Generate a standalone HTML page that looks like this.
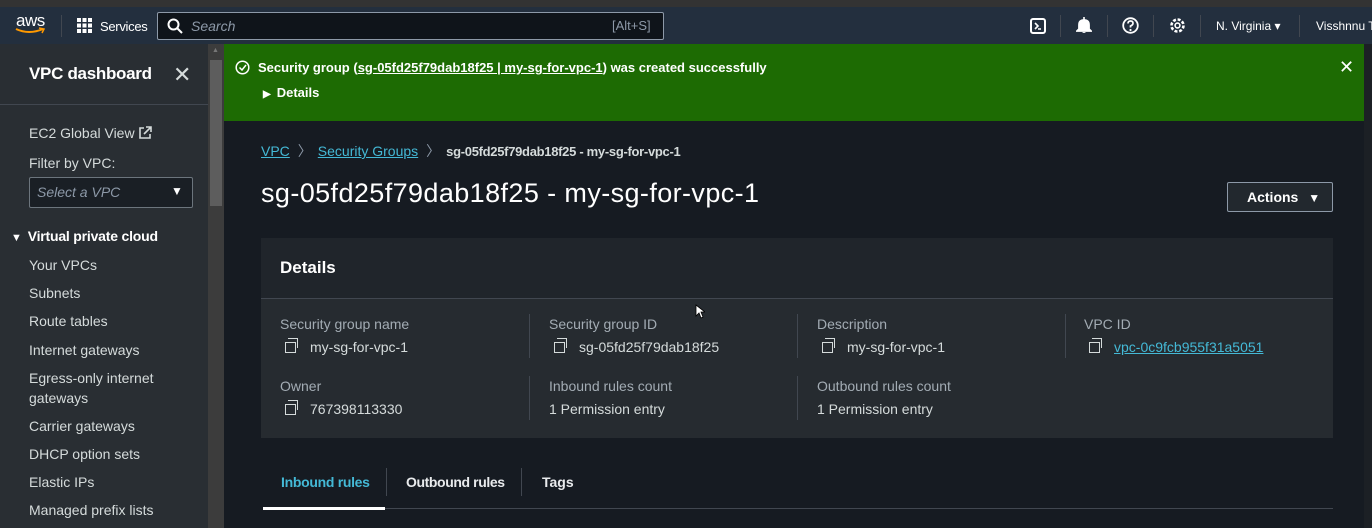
<!DOCTYPE html><html><head><meta charset="utf-8"><style>
*{box-sizing:border-box;margin:0;padding:0}
body{width:1372px;height:528px;overflow:hidden;background:#161b22;font-family:"Liberation Sans",sans-serif;color:#d5dbdb;position:relative;font-size:14px}
.a{position:absolute}
.link{color:#44b9d6;text-decoration:underline}
.lbl{color:#a3acb4;font-size:14px}
.val{color:#d5dbdb;font-size:14px}
.cp{display:inline-block;width:11px;height:11px;border:1.5px solid #d5dbdb;position:relative;margin-right:14px;vertical-align:-1px}
.cp:before{content:"";position:absolute;left:2px;top:-5px;width:9px;height:9px;border-top:1.5px solid #d5dbdb;border-right:1.5px solid #d5dbdb}
.nav{position:absolute;left:29px;font-size:14px;color:#d5dbdb}
.vs{position:absolute;width:1px;background:#414750}
</style></head><body>
<div class="a" style="left:0;top:0;width:1372px;height:7px;background:#333"></div>
<div class="a" style="left:0;top:7px;width:1372px;height:37px;background:#232f3e"></div>
<div class="a" style="left:16px;top:11px;color:#fff;font-size:17px;letter-spacing:-.5px">aws</div>
<svg class="a" style="left:15px;top:27px" width="32" height="8"><path d="M1 2 Q14 8 28 2" stroke="#f90" stroke-width="2" fill="none"/><path d="M24 1 L29 2 L27 6" stroke="#f90" stroke-width="1.5" fill="none"/></svg>
<div class="a" style="left:61px;top:15px;width:1px;height:22px;background:#414750"></div>
<svg class="a" style="left:77px;top:18px" width="15" height="15" fill="#fff"><rect x="0" y="0" width="4" height="4"/><rect x="5.5" y="0" width="4" height="4"/><rect x="11" y="0" width="4" height="4"/><rect x="0" y="5.5" width="4" height="4"/><rect x="5.5" y="5.5" width="4" height="4"/><rect x="11" y="5.5" width="4" height="4"/><rect x="0" y="11" width="4" height="4"/><rect x="5.5" y="11" width="4" height="4"/><rect x="11" y="11" width="4" height="4"/></svg>
<div class="a" style="left:100px;top:19px;color:#fff;font-size:13px;letter-spacing:-.3px">Services</div>
<div class="a" style="left:157px;top:12px;width:507px;height:28px;background:#0f141a;border:1px solid #8d99a8;border-radius:2px"></div>
<svg class="a" style="left:167px;top:18px" width="16" height="16"><circle cx="6.5" cy="6.5" r="5" stroke="#fff" stroke-width="2" fill="none"/><path d="M10 10 L15 15" stroke="#fff" stroke-width="2"/></svg>
<div class="a" style="left:191px;top:18px;color:#8d99a8;font-style:italic;font-size:14px">Search</div>
<div class="a" style="left:612px;top:18px;color:#8d99a8;font-size:13px">[Alt+S]</div>
<svg class="a" style="left:1030px;top:18px" width="16" height="16"><rect x="1" y="1" width="14" height="14" rx="2" stroke="#fff" stroke-width="2" fill="none"/><path d="M5 5 L8 8 L5 11 M8 11 H11" stroke="#fff" stroke-width="1.6" fill="none"/></svg>
<div class="a" style="left:1060px;top:15px;width:1px;height:22px;background:#414750"></div>
<svg class="a" style="left:1076px;top:17px" width="16" height="17"><path d="M3 12 L3 8 Q3 3 8 3 Q13 3 13 8 L13 12 L15 14 H1 Z" stroke="#fff" stroke-width="1.8" fill="#fff"/><path d="M6 15 Q8 17 10 15" fill="#fff"/><path d="M8 0 V3" stroke="#fff" stroke-width="1.6"/></svg>
<div class="a" style="left:1107px;top:15px;width:1px;height:22px;background:#414750"></div>
<svg class="a" style="left:1122px;top:17px" width="17" height="17"><circle cx="8.5" cy="8.5" r="7.3" stroke="#fff" stroke-width="1.8" fill="none"/><path d="M6 6.5 Q6 4 8.5 4 Q11 4 11 6.3 Q11 8 8.5 9 V10.5" stroke="#fff" stroke-width="1.7" fill="none"/><circle cx="8.5" cy="13" r="1.1" fill="#fff"/></svg>
<div class="a" style="left:1153px;top:15px;width:1px;height:22px;background:#414750"></div>
<svg class="a" style="left:1169px;top:17px" width="17" height="17"><circle cx="8.5" cy="8.5" r="6" stroke="#fff" stroke-width="2.6" stroke-dasharray="3 1.7" fill="none"/><circle cx="8.5" cy="8.5" r="2.4" stroke="#fff" stroke-width="1.6" fill="none"/></svg>
<div class="a" style="left:1200px;top:15px;width:1px;height:22px;background:#414750"></div>
<div class="a" style="left:1216px;top:19px;color:#fff;font-size:12px">N. Virginia ▾</div>
<div class="a" style="left:1299px;top:15px;width:1px;height:22px;background:#414750"></div>
<div class="a" style="left:1316px;top:19px;color:#fff;font-size:12px;white-space:nowrap">Visshnnu Te</div>

<div class="a" style="left:0;top:44px;width:208px;height:484px;background:#292e33"></div>
<div class="a" style="left:29px;top:64px;color:#fff;font-size:17px;font-weight:bold;letter-spacing:-.3px">VPC dashboard</div>
<div class="a" style="left:173px;top:62px;color:#d5dbdb;font-size:22px">✕</div>
<div class="a" style="left:0;top:104px;width:208px;height:1px;background:#414750"></div>
<div class="nav" style="top:125px">EC2 Global View <svg width="14" height="14" style="vertical-align:-2px"><path d="M6 2 H2 V12 H12 V8" stroke="#d5dbdb" stroke-width="1.6" fill="none"/><path d="M8 1 H13 V6 M13 1 L6 8" stroke="#d5dbdb" stroke-width="1.6" fill="none"/></svg></div>
<div class="nav" style="top:155px">Filter by VPC:</div>
<div class="a" style="left:29px;top:177px;width:164px;height:31px;background:#1a1f25;border:1px solid #6c757d;border-radius:2px"></div>
<div class="a" style="left:37px;top:184px;color:#8d99a8;font-style:italic;font-size:14px">Select a VPC</div>
<div class="a" style="left:171px;top:184px;color:#fff;font-size:12px">▼</div>
<div class="a" style="left:11px;top:228px;color:#fff;font-size:14px;font-weight:bold;letter-spacing:-.2px"><span style="font-size:11px;margin-right:6px">▼</span>Virtual private cloud</div>
<div class="nav" style="top:257px">Your VPCs</div>
<div class="nav" style="top:285px">Subnets</div>
<div class="nav" style="top:313px">Route tables</div>
<div class="nav" style="top:342px">Internet gateways</div>
<div class="nav" style="top:368px;line-height:20px">Egress-only internet<br>gateways</div>
<div class="nav" style="top:418px">Carrier gateways</div>
<div class="nav" style="top:446px">DHCP option sets</div>
<div class="nav" style="top:474px">Elastic IPs</div>
<div class="nav" style="top:502px">Managed prefix lists</div>

<div class="a" style="left:208px;top:44px;width:16px;height:484px;background:#3c3c3c"></div>
<div class="a" style="left:210px;top:60px;width:12px;height:146px;background:#5d5d5d"></div>
<div class="a" style="left:212px;top:47px;color:#777;font-size:7px">▲</div>

<div class="a" style="left:224px;top:44px;width:1140px;height:77px;background:#1d6b03"></div>
<svg class="a" style="left:235px;top:60px" width="15" height="15"><circle cx="7.5" cy="7.5" r="6.3" stroke="#fff" stroke-width="1.5" fill="none"/><path d="M4.5 7.5 L7 10 L11 5" stroke="#fff" stroke-width="1.5" fill="none"/></svg>
<div class="a" style="left:258px;top:60px;color:#fff;font-weight:bold;font-size:13px">Security group (<u>sg-05fd25f79dab18f25 | my-sg-for-vpc-1</u>) was created successfully</div>
<div class="a" style="left:263px;top:85px;color:#fff;font-weight:bold;font-size:13px"><span style="font-size:10px;margin-right:6px">▶</span>Details</div>
<div class="a" style="left:1339px;top:57px;color:#fff;font-size:18px">✕</div>
<div class="a" style="left:1364px;top:44px;width:8px;height:484px;background:#1c2025"></div>

<div class="a" style="left:261px;top:141px;font-size:14px;white-space:nowrap"><span class="link">VPC</span><span style="color:#8d99a8;margin:0 6px 0 8px">〉</span><span class="link">Security Groups</span><span style="color:#8d99a8;margin:0 6px 0 8px">〉</span><span style="color:#d5dbdb;font-weight:bold;font-size:13px;letter-spacing:-.3px">sg-05fd25f79dab18f25 - my-sg-for-vpc-1</span></div>
<div class="a" style="left:261px;top:178px;color:#fff;font-size:27px;letter-spacing:.4px">sg-05fd25f79dab18f25 - my-sg-for-vpc-1</div>
<div class="a" style="left:1227px;top:182px;width:106px;height:30px;border:1px solid #8d99a8;border-radius:2px;background:#22282e;color:#fff;font-weight:bold;font-size:14px;padding:6px 0 0 19px">Actions <span style="font-size:12px;margin-left:6px">▼</span></div>

<div class="a" style="left:261px;top:238px;width:1072px;height:60px;background:#20252b"></div>
<div class="a" style="left:280px;top:258px;color:#fff;font-weight:bold;font-size:17px">Details</div>
<div class="a" style="left:261px;top:298px;width:1072px;height:1px;background:#414750"></div>
<div class="a" style="left:261px;top:299px;width:1072px;height:139px;background:#262b30"></div>
<div class="vs" style="left:529px;top:314px;height:44px"></div><div class="vs" style="left:797px;top:314px;height:44px"></div><div class="vs" style="left:1065px;top:314px;height:44px"></div>
<div class="vs" style="left:529px;top:376px;height:44px"></div><div class="vs" style="left:797px;top:376px;height:44px"></div>
<div class="a lbl" style="left:280px;top:316px">Security group name</div>
<div class="a val" style="left:285px;top:339px"><span class="cp"></span>my-sg-for-vpc-1</div>
<div class="a lbl" style="left:549px;top:316px">Security group ID</div>
<div class="a val" style="left:554px;top:339px"><span class="cp"></span>sg-05fd25f79dab18f25</div>
<div class="a lbl" style="left:817px;top:316px">Description</div>
<div class="a val" style="left:822px;top:339px"><span class="cp"></span>my-sg-for-vpc-1</div>
<div class="a lbl" style="left:1084px;top:316px">VPC ID</div>
<div class="a val" style="left:1089px;top:339px"><span class="cp"></span><span class="link">vpc-0c9fcb955f31a5051</span></div>
<div class="a lbl" style="left:280px;top:378px">Owner</div>
<div class="a val" style="left:285px;top:401px"><span class="cp"></span>767398113330</div>
<div class="a lbl" style="left:549px;top:378px">Inbound rules count</div>
<div class="a val" style="left:549px;top:401px">1 Permission entry</div>
<div class="a lbl" style="left:817px;top:378px">Outbound rules count</div>
<div class="a val" style="left:817px;top:401px">1 Permission entry</div>
<svg class="a" style="left:695px;top:304px" width="10" height="15"><path d="M1 1 V12 L4 9 L6 14 L8 13 L6 8 L10 8 Z" fill="#fff" stroke="#000" stroke-width=".8"/></svg>

<div class="a" style="left:281px;top:474px;color:#44b9d6;font-weight:bold;font-size:14px;letter-spacing:-.3px">Inbound rules</div>
<div class="a" style="left:386px;top:468px;width:1px;height:28px;background:#414750"></div>
<div class="a" style="left:406px;top:474px;color:#e9ebed;font-weight:bold;font-size:14px;letter-spacing:-.4px">Outbound rules</div>
<div class="a" style="left:521px;top:468px;width:1px;height:28px;background:#414750"></div>
<div class="a" style="left:542px;top:474px;color:#e9ebed;font-weight:bold;font-size:14px">Tags</div>
<div class="a" style="left:263px;top:508px;width:1070px;height:1px;background:#414750"></div>
<div class="a" style="left:263px;top:507px;width:122px;height:3px;background:#fff"></div>
</body></html>
